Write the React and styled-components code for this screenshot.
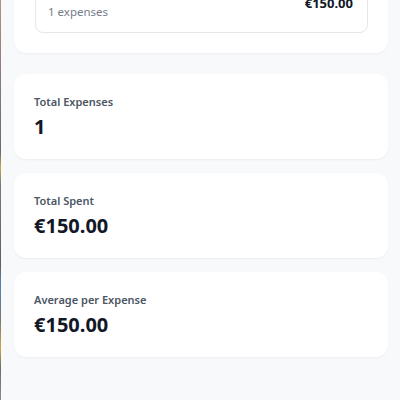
import React, { useLayoutEffect } from "react";
import styled, { createGlobalStyle } from "styled-components";

const GlobalStyle = createGlobalStyle`
  html, body {
    margin: 0;
    padding: 0;
    background: #f8f9fb;
    font-family: "Noto Sans", "Open Sans", Arial, sans-serif;
    color: #111827;
  }
  html::-webkit-scrollbar { display: none; }
`;

const Page = styled.div`
  display: flex;
  flex-direction: column;
  padding: 20px 12px 43px 14px;
`;

const StatList = styled.div`
  display: flex;
  flex-direction: column;
  gap: 14px;
  margin-top: 21px;
`;

const EdgeStrip = styled.div`
  position: fixed;
  left: 0;
  top: 0;
  bottom: 0;
  width: 1px;
  background: linear-gradient(
    180deg,
    #b58f86 0%,
    #8c7d7a 18%,
    #6b6b6b 38%,
    #c9a64a 42%,
    #7a7a7a 46%,
    #5f5f60 66%,
    #5a7fb5 71%,
    #777 80%,
    #c9a64a 87%,
    #6d6d6d 92%,
    #8a8a8a 100%
  );
`;

const Card = styled.section`
  background: #ffffff;
  border-radius: 12px;
  box-shadow: 0 1px 2px rgba(15, 23, 42, 0.05);
  padding: ${(p) => (p.$section ? "20px 20px 20px 21px" : "20px")};
`;

const SectionTitle = styled.h2`
  margin: 0 0 14px;
  font-size: 15px;
  font-weight: 700;
`;

const CategoryRow = styled.div`
  display: flex;
  align-items: center;
  justify-content: space-between;
  border: 1px solid #e5e7eb;
  border-radius: 8px;
  padding: 11px 14px 12px 12px;
`;

const CategoryInfo = styled.div`
  display: flex;
  flex-direction: column;
`;

const CategoryName = styled.span`
  font-size: 14px;
  font-weight: 600;
  line-height: 20px;
`;

const CategoryCount = styled.span`
  font-size: 11.5px;
  line-height: 16px;
  color: #767c88;
`;

const CategoryAmount = styled.span`
  font-size: 13px;
  font-weight: 700;
  margin-top: 1px;
`;

const StatLabel = styled.div`
  font-size: 11px;
  font-weight: 600;
  line-height: 16px;
  color: #4b5563;
`;

const StatValue = styled.div`
  margin-top: 4px;
  font-size: 20px;
  font-weight: 700;
  line-height: 25px;
  color: #111827;
`;

const stats = [
  { label: "Total Expenses", value: "1" },
  { label: "Total Spent", value: "€150.00" },
  { label: "Average per Expense", value: "€150.00" },
];

export default function App() {
  useLayoutEffect(() => {
    window.scrollTo(0, document.documentElement.scrollHeight);
  }, []);

  return (
    <>
      <GlobalStyle />
      <EdgeStrip />
      <Page>
        <Card $section>
          <SectionTitle>Expenses by Category</SectionTitle>
          <CategoryRow>
            <CategoryInfo>
              <CategoryName>Food</CategoryName>
              <CategoryCount>1 expenses</CategoryCount>
            </CategoryInfo>
            <CategoryAmount>€150.00</CategoryAmount>
          </CategoryRow>
        </Card>
        <StatList>
          {stats.map((s) => (
            <Card key={s.label}>
              <StatLabel>{s.label}</StatLabel>
              <StatValue>{s.value}</StatValue>
            </Card>
          ))}
        </StatList>
      </Page>
    </>
  );
}
